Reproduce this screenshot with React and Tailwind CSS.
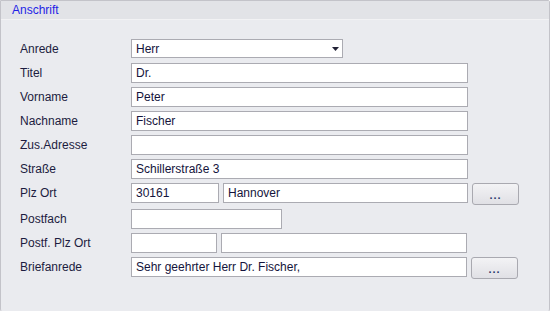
import React from 'react';

const fields = [
  { label: 'Anrede', type: 'select', value: 'Herr' },
  { label: 'Titel', value: 'Dr.' },
  { label: 'Vorname', value: 'Peter' },
  { label: 'Nachname', value: 'Fischer' },
  { label: 'Zus.Adresse', value: '' },
  { label: 'Straße', value: 'Schillerstraße 3' },
  { label: 'Plz Ort', type: 'plz', plz: '30161', ort: 'Hannover', w1: 'w-[88px]', w2: 'w-[245px]', button: true },
  { label: 'Postfach', type: 'short', value: '' },
  { label: 'Postf. Plz Ort', type: 'plz', plz: '', ort: '', w1: 'w-[86px]', w2: 'w-[246px]' },
  { label: 'Briefanrede', value: 'Sehr geehrter Herr Dr. Fischer,', button: true, wide: 'w-[336px]' },
];

function Box({ value, className = '' }) {
  return (
    <div className={`h-[20px] bg-white border border-[#ababb2] px-[4px] flex items-center text-[12px] text-[#14143c] whitespace-nowrap overflow-hidden ${className}`}>
      {value}
    </div>
  );
}

function DotsButton() {
  return (
    <div className="ml-[4px] w-[47px] h-[22px] rounded-[3px] border border-[#a9a9b0] bg-gradient-to-b from-[#f3f3f5] to-[#e0e0e5] flex items-end justify-center pb-[3px] text-[11px] font-bold text-[#2a3a6a] leading-none tracking-[1px]">
      ...
    </div>
  );
}

export default function App() {
  return (
    <div className="w-[550px] h-[311px] overflow-hidden bg-white" style={{ fontFamily: '"Liberation Sans", Arial, sans-serif' }}>
      <div className="w-[550px] h-[314px] border border-[#c3c3c9] rounded-tr-[2px] rounded-b-[5px] bg-[#eaebef] flex flex-col">
        <div className="h-[19px] bg-[#e2e3e7] border-b border-[#f2f2f4] flex items-center pl-[11px] text-[12px] text-[#1f1fe6]">
          Anschrift
        </div>
        <div className="pt-[19px] pl-[19px] flex flex-col gap-[4px]">
          {fields.map((f) => (
            <div key={f.label} className="flex items-start">
              <div className="w-[111px] h-[20px] flex items-center text-[12px] text-[#1c1c40]">{f.label}</div>
              {f.type === 'select' ? (
                <div className="w-[212px] h-[19px] bg-white border border-[#ababb2] pl-[4px] pr-[3px] flex items-center justify-between text-[12px] text-[#14143c]">
                  <span>{f.value}</span>
                  <svg width="7" height="4" viewBox="0 0 7 4">
                    <path d="M0 0H7L3.5 4Z" fill="#222236" />
                  </svg>
                </div>
              ) : f.type === 'plz' ? (
                <>
                  <Box value={f.plz} className={f.w1} />
                  <Box value={f.ort} className={`${f.w2} ml-[4px]`} />
                  {f.button && <DotsButton />}
                </>
              ) : f.type === 'short' ? (
                <Box value={f.value} className="w-[151px]" />
              ) : (
                <>
                  <Box value={f.value} className={f.wide || 'w-[337px]'} />
                  {f.button && <DotsButton />}
                </>
              )}
            </div>
          ))}
        </div>
      </div>
    </div>
  );
}
